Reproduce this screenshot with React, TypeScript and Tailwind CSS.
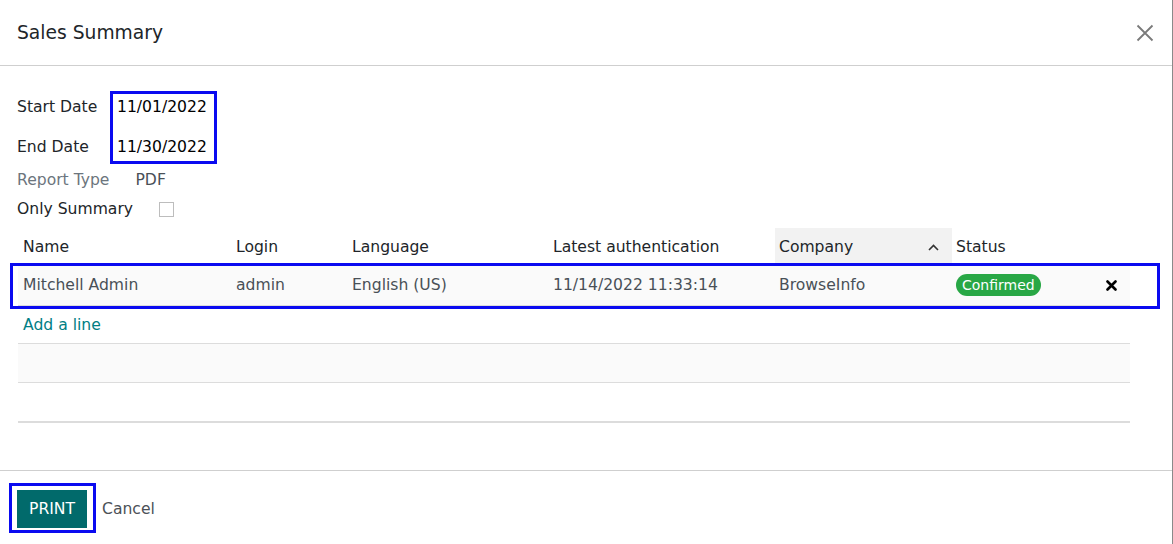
import React from "react";

const font = { fontFamily: '"DejaVu Sans", "Liberation Sans", sans-serif' };

function CloseIcon() {
  return (
    <svg width="18" height="18" viewBox="0 0 18 18" fill="none">
      <path d="M1.5 1.5 L16.5 16.5 M16.5 1.5 L1.5 16.5" stroke="#7a7a7a" strokeWidth="1.8" />
    </svg>
  );
}

function Chevron() {
  return (
    <svg width="11" height="7" viewBox="0 0 11 7" fill="none">
      <path d="M1 6 L5.5 1.5 L10 6" stroke="#333" strokeWidth="1.6" />
    </svg>
  );
}

function Times() {
  return (
    <svg width="11" height="11" viewBox="0 0 11 11" fill="none">
      <path d="M1.5 1.5 L9.5 9.5 M9.5 1.5 L1.5 9.5" stroke="#000" strokeWidth="2.6" strokeLinecap="round" />
    </svg>
  );
}

export default function App() {
  return (
    <div
      className="w-[1173px] h-[544px] bg-white border-r border-[#8a8a8a] flex flex-col text-[15.6px] text-[#212529] overflow-hidden"
      style={font}
    >
      {/* Header */}
      <div className="h-[66px] shrink-0 flex items-center justify-between pl-[17px] pr-[18px] border-b border-[#cfcfcf]">
        <div className="text-[18.7px] text-[#212529] pt-[1px]">Sales Summary</div>
        <div>
          <CloseIcon />
        </div>
      </div>

      {/* Body */}
      <div className="flex-1 flex flex-col pt-[25px]">
        <div className="flex pl-[17px]">
          <div className="w-[93px] pt-[4px] flex flex-col gap-[16px]">
            <div className="h-[24px] leading-[24px]">Start Date</div>
            <div className="h-[24px] leading-[24px]">End Date</div>
          </div>
          <div className="w-[107px] h-[73px] border-[3px] border-[#0a0af0] pt-[1px] px-[4px] flex flex-col gap-[16px] text-black">
            <div className="h-[24px] leading-[24px]">11/01/2022</div>
            <div className="h-[24px] leading-[24px]">11/30/2022</div>
          </div>
        </div>

        <div className="h-[30px] flex items-center pl-[17px] gap-[26px] pt-[3px]">
          <div className="text-[#6c757d]">Report Type</div>
          <div className="text-[#495057]">PDF</div>
        </div>
        <div className="h-[28px] flex items-center pl-[17px] gap-[26px] pt-[3px]">
          <div>Only Summary</div>
          <div className="w-[15px] h-[15px] border border-[#bdbdbd] bg-white -mt-[1px]" />
        </div>

        {/* Table */}
        <div className="ml-[18px] w-[1112px] mt-[6px]">
          <div className="h-[36px] flex items-stretch">
            <div className="w-[214px] pl-[5px] pt-[3px] flex items-center">Name</div>
            <div className="w-[116px] pl-[4px] pt-[3px] flex items-center">Login</div>
            <div className="w-[201px] pl-[4px] pt-[3px] flex items-center">Language</div>
            <div className="w-[226px] pl-[4px] pt-[3px] flex items-center">Latest authentication</div>
            <div className="w-[177px] pl-[4px] pr-[13px] pt-[3px] flex items-center justify-between bg-[#f2f2f2]">
              <span>Company</span>
              <Chevron />
            </div>
            <div className="flex-1 pl-[4px] pt-[3px] flex items-center">Status</div>
            <div className="w-[40px]" />
          </div>

          <div className="relative h-[42px] flex items-stretch bg-[#fafafa] border-b border-[#dcdcdc] text-[#495057]">
            <div className="w-[214px] pl-[5px] pt-[3px] flex items-center">Mitchell Admin</div>
            <div className="w-[116px] pl-[4px] pt-[3px] flex items-center">admin</div>
            <div className="w-[201px] pl-[4px] pt-[3px] flex items-center">English (US)</div>
            <div className="w-[226px] pl-[4px] pt-[3px] flex items-center">11/14/2022 11:33:14</div>
            <div className="w-[177px] pl-[4px] pt-[3px] flex items-center">BrowseInfo</div>
            <div className="flex-1 pl-[4px] pt-[1px] flex items-center">
              <span className="h-[22px] px-[6px] rounded-full bg-[#28a745] text-white text-[14px] leading-[22px]">
                Confirmed
              </span>
            </div>
            <div className="w-[40px] flex items-center justify-start pl-[16px] pt-[2px]">
              <Times />
            </div>
            <div className="absolute left-[-8px] right-[-30px] top-[-1px] bottom-[-4px] border-[3px] border-[#0a0af0] pointer-events-none" />
          </div>

          <div className="h-[38px] flex items-center pl-[5px] pt-[2px] text-[#017e84] border-b border-[#dcdcdc]">
            Add a line
          </div>
          <div className="h-[39px] bg-[#fafafa] border-b border-[#dcdcdc]" />
          <div className="h-[40px] border-b-2 border-[#dcdcdc]" />
        </div>
      </div>

      {/* Footer */}
      <div className="h-[74px] shrink-0 border-t border-[#cfcfcf] flex items-start pt-[12px] pl-[9px]">
        <div className="border-[3px] border-[#0a0af0] pl-[5px] pr-[6px] pt-[4px] pb-[2px]">
          <button className="w-[70px] h-[38px] pt-[1px] bg-[#016a6b] text-white text-[15.6px]" style={font}>
            PRINT
          </button>
        </div>
        <div className="ml-[6px] h-[50px] pt-[3px] flex items-center text-[#4c5157]">Cancel</div>
      </div>
    </div>
  );
}
